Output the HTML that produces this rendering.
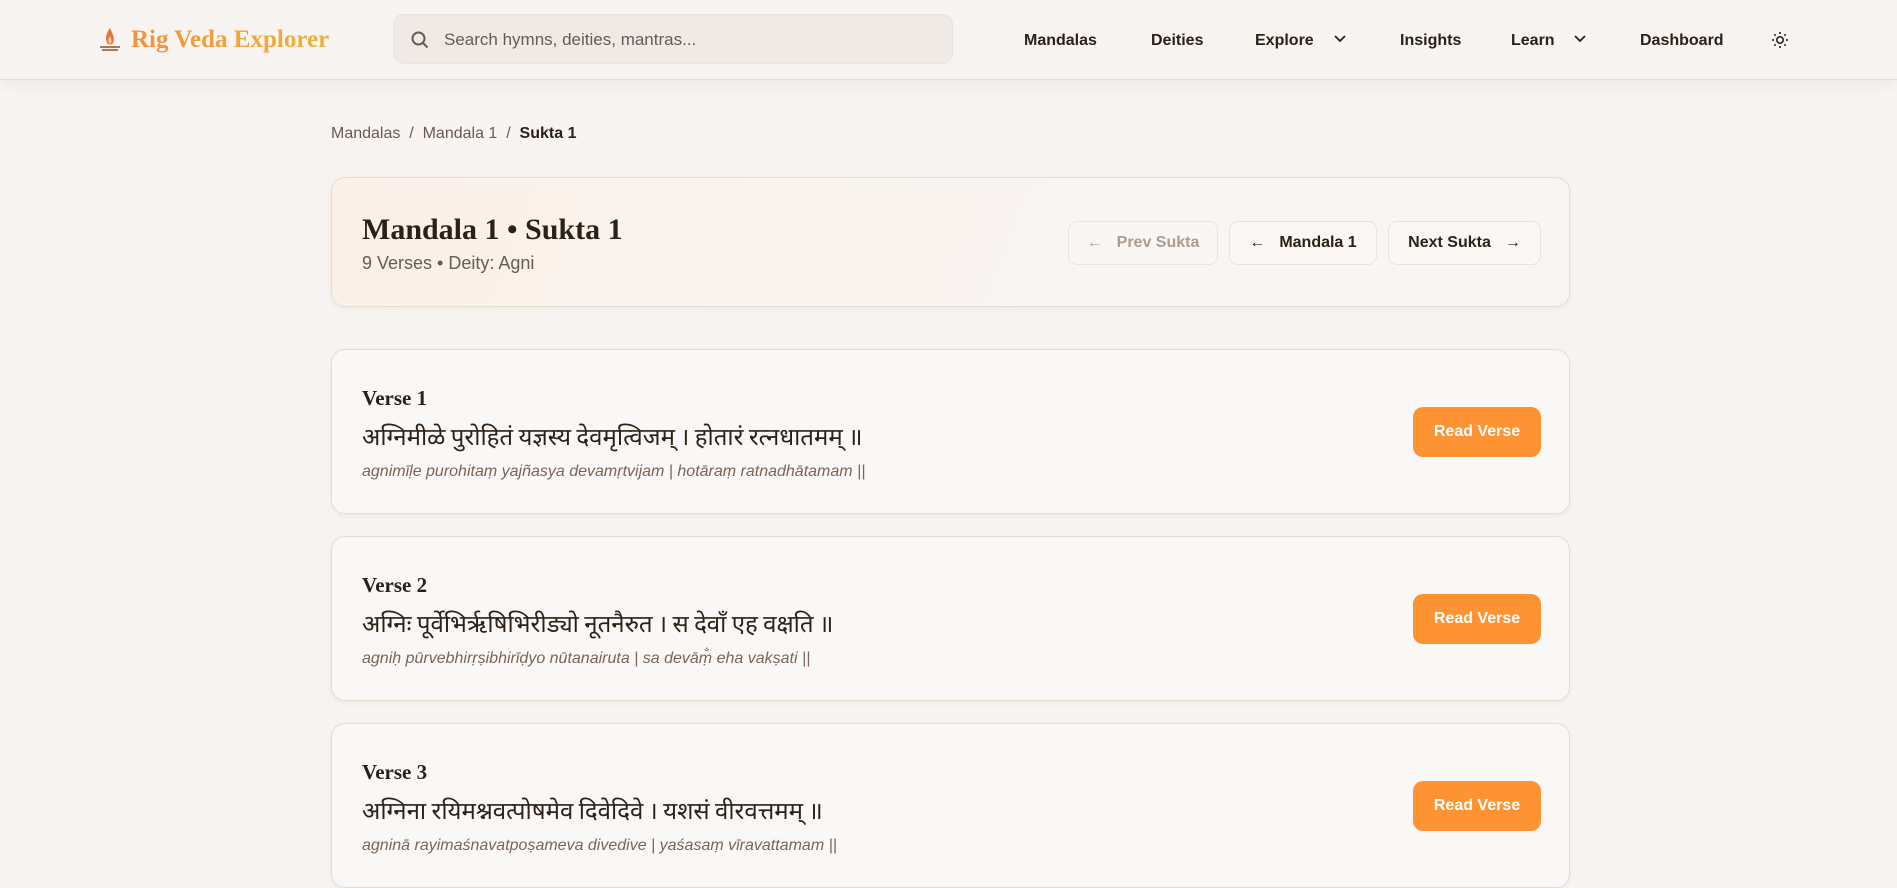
<!DOCTYPE html>
<html><head><meta charset="utf-8"><style>
*{box-sizing:border-box;margin:0;padding:0}
body{width:1897px;height:867px;overflow:hidden;background:#f8f4f1;font-family:"Liberation Sans","Noto Sans CJK SC",sans-serif;color:#2b2118}
.hdr{position:absolute;left:0;top:0;width:1897px;height:80px;background:#f8f4f1;border-bottom:1px solid #e4dbd2;box-shadow:0 4px 14px rgba(0,0,0,.06)}
.logo{position:absolute;left:97px;top:26px;font-family:"Liberation Serif",serif;font-weight:bold;font-size:25px;display:flex;align-items:center;gap:8px}
.logo span{background:linear-gradient(90deg,#f7903a,#ecb43a);-webkit-background-clip:text;background-clip:text;color:transparent}
.search{position:absolute;left:393px;top:14px;width:560px;height:50px;border-radius:10px;background:#efeae5;border:1px solid #ebe5df}
.search span{position:absolute;left:50px;top:15px;font-size:17px;color:#6b5a4e}
.nav{position:absolute;top:32px;font-size:16px;font-weight:bold;color:#2b2118}
.crumb{position:absolute;left:331px;top:125px;font-size:16px;color:#6b5a4e}
.crumb b{color:#2b2118}
.card{position:absolute;left:331px;width:1239px;border:1px solid #e6ddd5;border-radius:14px;background:#faf8f6;box-shadow:0 2px 6px rgba(0,0,0,.05)}
.h1{font-family:"Liberation Serif",serif;font-weight:bold;font-size:30px;color:#2b2118}
.btn{position:absolute;top:43px;height:44px;border:1px solid #ebe3dc;border-radius:9px;font-size:16px;font-weight:bold;display:flex;align-items:center;justify-content:center;gap:14px;background:#faf7f4}
.vl{position:absolute;left:30px;top:36px;font-family:"Liberation Serif",serif;font-weight:bold;font-size:21px}
.sk{position:absolute;left:30px;top:67px;font-family:"Noto Sans CJK SC","Liberation Sans",sans-serif;font-size:24px}
.tr{position:absolute;left:30px;top:113px;font-style:italic;font-size:16px;color:#7a6458}
.rv{position:absolute;left:1081px;top:57px;width:128px;height:50px;border-radius:10px;background:#fd9333;color:#fff;font-weight:bold;font-size:16px;display:flex;align-items:center;justify-content:center}
</style></head><body>
<div class="hdr">
<div class="logo"><svg width="26" height="28" viewBox="0 0 26 28"><path d="M13 2C9 8 8 12 10 17c1 2 5 2 6 0 2-4 0-9-3-15z" fill="#e8733a"/><path d="M13 10c-2 3-2 5-1 7 1 1 2 0 2 0 1-2 0-5-1-7z" fill="#fbd08a"/><path d="M3 20h20v2H3zM5 23h16v2H5z" fill="#a77b5a"/></svg><span>Rig Veda Explorer</span></div>
<div class="search"><svg style="position:absolute;left:16px;top:15px" width="20" height="20" viewBox="0 0 20 20" fill="none" stroke="#6b5a4e" stroke-width="2"><circle cx="8.5" cy="8.5" r="6"/><path d="M13 13l4.5 4.5"/></svg><span>Search hymns, deities, mantras...</span></div>
<div class="nav" style="left:1024px">Mandalas</div>
<div class="nav" style="left:1151px">Deities</div>
<div class="nav" style="left:1255px">Explore</div>
<svg style="position:absolute;left:1333px;top:34px" width="14" height="10" viewBox="0 0 14 10" fill="none" stroke="#2b2118" stroke-width="1.8"><path d="M2 2l5 5 5-5"/></svg>
<div class="nav" style="left:1400px">Insights</div>
<div class="nav" style="left:1511px">Learn</div>
<svg style="position:absolute;left:1573px;top:34px" width="14" height="10" viewBox="0 0 14 10" fill="none" stroke="#2b2118" stroke-width="1.8"><path d="M2 2l5 5 5-5"/></svg>
<div class="nav" style="left:1640px">Dashboard</div>
<svg style="position:absolute;left:1771px;top:31px" width="18" height="18" viewBox="0 0 18 18" fill="none" stroke="#2b2118" stroke-width="1.6"><circle cx="9" cy="9" r="3.2"/><path d="M9 1v2M9 15v2M1 9h2M15 9h2M3.3 3.3l1.4 1.4M13.3 13.3l1.4 1.4M3.3 14.7l1.4-1.4M13.3 4.7l1.4-1.4"/></svg>
</div>
<div class="crumb">Mandalas &nbsp;/&nbsp; Mandala 1 &nbsp;/&nbsp; <b>Sukta 1</b></div>
<div class="card" style="top:177px;height:130px;background:linear-gradient(110deg,#fbf0e8,#f9f5f2 60%)">
<div class="h1" style="position:absolute;left:30px;top:35px">Mandala 1 • Sukta 1</div>
<div style="position:absolute;left:30px;top:75px;font-size:18px;color:#6b5a4e">9 Verses • Deity: Agni</div>
<div class="btn" style="left:736px;width:150px;color:#a59388;opacity:.9">← <span>Prev Sukta</span></div>
<div class="btn" style="left:897px;width:148px">← <span>Mandala 1</span></div>
<div class="btn" style="left:1056px;width:153px"><span>Next Sukta</span> →</div>
</div>
<div class="card" style="top:349px;height:165px">
<div class="vl">Verse 1</div>
<div class="sk">अग्निमीळे पुरोहितं यज्ञस्य देवमृत्विजम् । होतारं रत्नधातमम् ॥</div>
<div class="tr">agnimīḷe purohitaṃ yajñasya devamṛtvijam | hotāraṃ ratnadhātamam ||</div>
<div class="rv">Read Verse</div></div>
<div class="card" style="top:536px;height:165px">
<div class="vl">Verse 2</div>
<div class="sk">अग्निः पूर्वेभिर्ऋषिभिरीड्यो नूतनैरुत । स देवाँ एह वक्षति ॥</div>
<div class="tr">agniḥ pūrvebhirṛṣibhirīḍyo nūtanairuta | sa devāṃ̐ eha vakṣati ||</div>
<div class="rv">Read Verse</div></div>
<div class="card" style="top:723px;height:165px">
<div class="vl">Verse 3</div>
<div class="sk">अग्निना रयिमश्नवत्पोषमेव दिवेदिवे । यशसं वीरवत्तमम् ॥</div>
<div class="tr">agninā rayimaśnavatpoṣameva divedive | yaśasaṃ vīravattamam ||</div>
<div class="rv">Read Verse</div></div>
</body></html>
